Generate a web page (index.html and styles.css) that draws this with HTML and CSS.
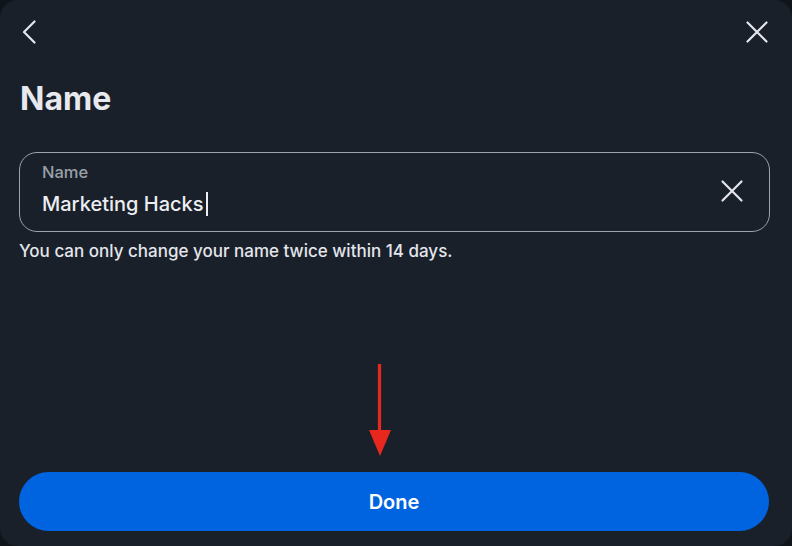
FILE: index.html
```html
<!DOCTYPE html>
<html>
<head>
<meta charset="utf-8">
<link rel="stylesheet" href="styles.css">
</head>
<body>
<div class="panel">
  <div class="topbar">
    <button class="icon-btn" aria-label="Back">
      <svg width="24" height="24" viewBox="0 0 24 24"><path d="M15.5 1.5 L5 12 L15.5 22.5" fill="none" stroke="#e4e6eb" stroke-width="2.2" stroke-linecap="round" stroke-linejoin="round"/></svg>
    </button>
    <button class="icon-btn" aria-label="Close">
      <svg width="24" height="24" viewBox="0 0 24 24"><path d="M2.5 2.5 L21.5 21.5 M21.5 2.5 L2.5 21.5" fill="none" stroke="#e4e6eb" stroke-width="2.2" stroke-linecap="round"/></svg>
    </button>
  </div>
  <h1 class="title">Name</h1>
  <div class="field">
    <div class="field-text">
      <div class="field-label">Name</div>
      <div class="field-value">Marketing Hacks<span class="caret"></span></div>
    </div>
    <button class="icon-btn clear" aria-label="Clear">
      <svg width="24" height="24" viewBox="0 0 24 24"><path d="M2.5 2.5 L21.5 21.5 M21.5 2.5 L2.5 21.5" fill="none" stroke="#e4e6eb" stroke-width="2.2" stroke-linecap="round"/></svg>
    </button>
  </div>
  <p class="helper">You can only change your name twice within 14 days.</p>
  <div class="spacer"></div>
  <div class="footer">
    <svg class="arrow" width="30" height="100" viewBox="0 0 30 100"><path d="M14.5 2 L14.5 72" stroke="#e8281e" stroke-width="3.2"/><path d="M4 68 L26 68 L15 94 Z" fill="#e8281e"/></svg>
    <button class="done">Done</button>
  </div>
</div>
</body>
</html>
```

FILE: styles.css
```css
* { box-sizing: border-box; }
html, body { margin: 0; padding: 0; height: 100%; }
body {
  background: #10151b;
  font-family: Inter, "Noto Sans", sans-serif;
  color: #e4e6eb;
}
.panel {
  width: 792px;
  height: 546px;
  background: #19202a;
  border-radius: 18px;
  padding: 19px 23px 15px 19px;
  display: flex;
  flex-direction: column;
}
.topbar {
  display: flex;
  justify-content: space-between;
  align-items: center;
  height: 26px;
}
.icon-btn {
  background: none;
  border: 0;
  padding: 0;
  width: 24px;
  height: 24px;
  display: flex;
  align-items: center;
  justify-content: center;
}
.title {
  margin: 35px 0 0 1px;
  font-size: 32px;
  font-weight: 700;
  line-height: 38px;
  color: #e7e9ee;
}
.field {
  margin-top: 34px;
  margin-right: -1px;
  height: 80px;
  border: 1.5px solid #9ea3aa;
  border-radius: 18px;
  display: flex;
  align-items: center;
  padding: 0 25px 0 22px;
}
.field-text {
  flex: 1;
  align-self: flex-start;
  padding-top: 9px;
}
.field-label {
  font-size: 16.5px;
  font-weight: 500;
  line-height: 20px;
  color: #9aa0a8;
}
.field-value {
  font-size: 20px;
  font-weight: 500;
  line-height: 28px;
  color: #eceef2;
  display: flex;
  align-items: center;
  margin-top: 8px;
}
.caret {
  display: inline-block;
  width: 2px;
  height: 24px;
  background: #eceef2;
  margin-left: 3px;
}
.clear { margin-top: -2px; }
.helper {
  margin: 8px 0 0 0;
  font-size: 17px;
  font-weight: 500;
  line-height: 22px;
  color: #e4e6eb;
}
.spacer { flex: 1; }
.footer {
  display: flex;
  flex-direction: column;
  align-items: center;
}
.arrow {
  margin-right: 28px;
  margin-bottom: 10px;
}
.done {
  width: 750px;
  height: 59px;
  border: 0;
  border-radius: 30px;
  background: #0064e0;
  color: #ffffff;
  font-family: Inter, "Noto Sans", sans-serif;
  font-size: 20px;
  font-weight: 600;
}
```
